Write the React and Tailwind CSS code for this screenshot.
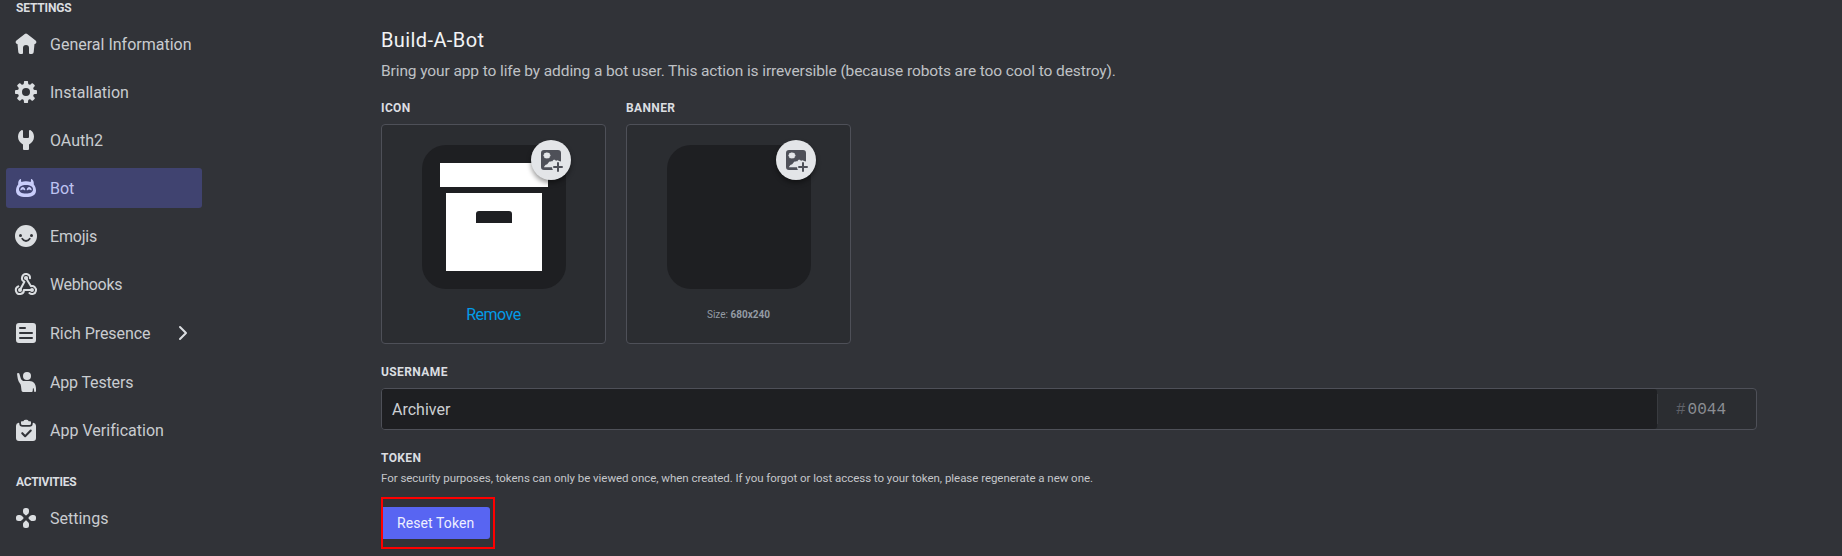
import React from "react";

function Icon({ children, size = "size-6", ...rest }) {
  return (
    <svg viewBox="0 0 24 24" fill="currentColor" className={`${size} shrink-0`} {...rest}>
      {children}
    </svg>
  );
}

const HomeIcon = () => (
  <Icon>
    <path d="m2.4 8.4 8.38-6.46a2 2 0 0 1 2.44 0l8.39 6.45a2 2 0 0 1-.79 3.54l-.32.07-.82 8.2a2 2 0 0 1-1.99 1.8H16a1 1 0 0 1-1-1v-5a3 3 0 0 0-6 0v5a1 1 0 0 1-1 1H6.31a2 2 0 0 1-1.99-1.8L3.5 12l-.32-.07a2 2 0 0 1-.78-3.54Z" />
  </Icon>
);

const GearIcon = () => (
  <Icon>
    <path
      fillRule="evenodd"
      d="M10.56 1.1c-.46.05-.7.53-.64.98.18 1.16-.19 2.2-.98 2.53-.8.33-1.79-.15-2.49-1.1-.27-.36-.78-.52-1.14-.24-.77.59-1.45 1.27-2.04 2.04-.28.36-.12.87.24 1.14.96.7 1.43 1.7 1.1 2.49-.33.8-1.37 1.16-2.53.98-.45-.07-.93.18-.99.64a11.1 11.1 0 0 0 0 2.88c.06.46.54.7.99.64 1.16-.18 2.2.19 2.53.98.33.8-.14 1.79-1.1 2.49-.36.27-.52.78-.24 1.14.59.77 1.27 1.45 2.04 2.04.36.28.87.12 1.14-.24.7-.95 1.7-1.43 2.49-1.1.8.33 1.16 1.37.98 2.53-.07.45.18.93.64.99a11.1 11.1 0 0 0 2.88 0c.46-.06.7-.54.64-.99-.18-1.16.19-2.2.98-2.53.8-.33 1.79.14 2.49 1.1.27.36.78.52 1.14.24.77-.59 1.45-1.27 2.04-2.04.28-.36.12-.87-.24-1.14-.96-.7-1.43-1.7-1.1-2.49.33-.8 1.37-1.16 2.53-.98.45.07.93-.18.99-.64a11.1 11.1 0 0 0 0-2.88c-.06-.46-.54-.7-.99-.64-1.16.18-2.2-.19-2.53-.98-.33-.8.14-1.79 1.1-2.49.36-.27.52-.78.24-1.14a11.07 11.07 0 0 0-2.04-2.04c-.36-.28-.87-.12-1.14.24-.7.96-1.7 1.43-2.49 1.1-.8-.33-1.16-1.37-.98-2.53.07-.45-.18-.93-.64-.99a11.1 11.1 0 0 0-2.88 0ZM16 12a4 4 0 1 1-8 0 4 4 0 0 1 8 0Z"
    />
  </Icon>
);

const WrenchIcon = () => (
  <Icon>
    <path d="M9 2.9c0-.7-.7-1.1-1.3-.8A8 8 0 0 0 4 8.8c0 3.4 2 6 5 7.6V21a1 1 0 0 0 1 1h4a1 1 0 0 0 1-1v-4.600c3-1.600 5-4.200 5-7.600a8 8 0 0 0-3.700-6.700c-.6-.3-1.300.1-1.300.8V9a1 1 0 0 1-1 1h-4a1 1 0 0 1-1-1V2.900Z" />
  </Icon>
);

const BotIcon = () => (
  <Icon>
    <path
      fillRule="evenodd"
      d="M6.300 3.100c.4-.3.9.1.800.6-.2.900-.1 1.700.3 2.300A12 12 0 0 1 12 5.200c1.700 0 3.200.3 4.600.8.4-.6.500-1.400.3-2.300-.1-.5.4-.9.8-.6 1.700 1.100 2.300 3.200 2.100 5.300 1.400 1.700 2.200 3.800 2.200 6.100 0 4.800-4 6.500-10 6.500S2 19.300 2 14.500c0-2.300.8-4.400 2.200-6.100C4 6.300 4.600 4.200 6.300 3.100ZM12 9c-4.400 0-7 1.600-7 4.300S7.600 17.600 12 17.600s7-1.600 7-4.300S16.400 9 12 9Z"
    />
    <path d="M6.300 13.800c.4-1.800 1.300-2.800 2.500-2.800s2.100 1 2.500 2.800c.1.500-.5.700-.8.400-.5-.4-1-.6-1.700-.6s-1.200.2-1.700.6c-.3.300-.9.100-.8-.4ZM12.700 13.800c.4-1.800 1.300-2.800 2.500-2.800s2.100 1 2.500 2.800c.1.500-.5.700-.8.400-.5-.4-1-.6-1.700-.6s-1.200.2-1.700.6c-.3.300-.9.100-.8-.4Z" />
  </Icon>
);

const SmileIcon = () => (
  <Icon>
    <circle cx="12" cy="12" r="11" />
    <g className="text-[#313338]">
      <circle cx="6.500" cy="11.500" r="1.500" fill="currentColor" />
      <circle cx="17.500" cy="11.500" r="1.500" fill="currentColor" />
      <path d="M8.200 14.700c.8 1.500 2.200 2.300 3.800 2.300s3-.8 3.800-2.300" fill="none" stroke="currentColor" strokeWidth="1.800" strokeLinecap="round" />
    </g>
  </Icon>
);

const WebhookIcon = () => (
  <Icon>
    <circle cx="12" cy="6" r="2.100" />
    <circle cx="6" cy="18" r="2" />
    <circle cx="18" cy="18" r="2" />
    <g fill="none" stroke="currentColor" strokeWidth="2" strokeLinecap="round" strokeLinejoin="round">
      <path d="M6 18l4.400-8.300A4 4 0 1 1 16 6.300" />
      <path d="M12.200 6.500 17 14.200a4 4 0 1 1-1.600 6.900" />
      <path d="M18 18H9.900a4 4 0 1 1-5.600-3.600" />
    </g>
  </Icon>
);

const ArticleIcon = () => (
  <Icon>
    <path
      fillRule="evenodd"
      d="M5 2h14a3 3 0 0 1 3 3v14a3 3 0 0 1-3 3H5a3 3 0 0 1-3-3V5a3 3 0 0 1 3-3Zm1 4a1 1 0 0 0 0 2h5a1 1 0 1 0 0-2H6Zm0 5a1 1 0 1 0 0 2h12a1 1 0 1 0 0-2H6Zm0 5a1 1 0 1 0 0 2h12a1 1 0 1 0 0-2H6Z"
    />
  </Icon>
);

const TesterIcon = () => (
  <Icon>
    <circle cx="13" cy="6" r="4" />
    <path d="M3.100 4.100c-.2-1.300 1.700-1.700 2.200-.5l1.500 4.800c.5 1.500 1.700 2.600 3.700 2.600h5C19.500 11 22 14 22 18.500V21a1 1 0 0 1-1 1h-.6l-.7-3.500c-.1-.5-.8-.5-.8 0l-.2 2.600a1 1 0 0 1-1 .9H9a1.500 1.500 0 0 1-1.500-1.400L7 16.200c-.1-1.200-.5-2-1.200-2.900C3.800 10.800 3.500 7.500 3.100 4.100Z" />
  </Icon>
);

const ClipboardIcon = () => (
  <Icon>
    <path d="M9.300 3.200A3 3 0 0 1 12 1.800c1.200 0 2.200.5 2.700 1.400H16c.6 0 1 .4 1 1v1.300a1.500 1.500 0 0 1-1.500 1.500h-7A1.500 1.500 0 0 1 7 5.500V4.200c0-.6.4-1 1-1h1.300Z" />
    <path
      fillRule="evenodd"
      d="M4.600 4.800c.4-.1.700.2.700.6A3.300 3.300 0 0 0 8.600 8.700h6.800a3.300 3.300 0 0 0 3.300-3.300c0-.4.300-.7.700-.6A3 3 0 0 1 22 7.700V20a3 3 0 0 1-3 3H5a3 3 0 0 1-3-3V7.700a3 3 0 0 1 2.600-2.900Zm12.900 8.400a1 1 0 0 0-1.500-1.400l-4.800 4.900-2.200-2.200a1 1 0 0 0-1.500 1.400l2.900 3a1 1 0 0 0 1.500 0l5.600-5.700Z"
    />
  </Icon>
);

const PadIcon = () => (
  <Icon>
    <path d="M9 4.500A2.500 2.500 0 0 1 11.500 2h1A2.500 2.500 0 0 1 15 4.500v1.300c0 .6-.2 1.100-.6 1.600l-1.500 1.700c-.5.500-1.300.5-1.800 0L9.600 7.400C9.200 6.900 9 6.400 9 5.800V4.500Z" />
    <path d="M9 19.500a2.500 2.500 0 0 0 2.500 2.500h1a2.500 2.500 0 0 0 2.500-2.500v-1.300c0-.6-.2-1.100-.6-1.600l-1.500-1.700c-.5-.5-1.300-.5-1.800 0l-1.500 1.700c-.4.500-.6 1-.6 1.600v1.300Z" />
    <path d="M4.500 9A2.500 2.500 0 0 0 2 11.500v1A2.500 2.500 0 0 0 4.500 15h1.300c.6 0 1.100-.2 1.600-.6l1.700-1.500c.5-.5.500-1.300 0-1.800L7.400 9.600C6.900 9.200 6.400 9 5.800 9H4.500Z" />
    <path d="M19.500 9a2.500 2.500 0 0 1 2.500 2.500v1a2.500 2.500 0 0 1-2.500 2.500h-1.300c-.6 0-1.100-.2-1.600-.6l-1.700-1.500c-.5-.5-.5-1.300 0-1.800l1.700-1.500c.5-.4 1-.6 1.600-.6h1.300Z" />
  </Icon>
);

const ImagePlusIcon = () => (
  <Icon>
    <path
      fillRule="evenodd"
      d="M5 2h14a3 3 0 0 1 3 3v8.600c-.5-.5-1.200-.7-2-.7-.9-1-2.400-1-3 0l-.7-.8c-.5-.6-1.500-.6-2 0l-1.200 1.400c-.5-.3-1.200-.2-1.600.2-.6-.3-1.400-.1-1.700.5L8 16.600c-.7-.2-1.400 0-1.800.6l-1.100 1.500c-.2.300 0 .6.300.6h7.700c-.1 1.100.2 2 .9 2.700H5a3 3 0 0 1-3-3V5a3 3 0 0 1 3-3Zm3.900 2.900a1.100 1.100 0 0 0-1.900 0 1.200 1.200 0 0 0-1.800 1.400 1.200 1.200 0 0 0 0 2.300A1.200 1.200 0 0 0 7 10a1.100 1.100 0 0 0 1.900 0 1.200 1.200 0 0 0 1.800-1.400 1.200 1.200 0 0 0 0-2.300 1.200 1.200 0 0 0-1.800-1.400Z"
    />
    <path d="M19 15v8M15 19h8" fill="none" stroke="currentColor" strokeWidth="2" strokeLinecap="round" />
  </Icon>
);

function NavItem({ icon, label, active, arrow, tall, spacing = "" }) {
  return (
    <li
      className={`flex items-center rounded-[3px] pl-2 ${tall ? "h-[42px]" : "h-10"} ${
        active ? "bg-[#404370] text-[#c9cdfb]" : "text-[#dbdee1]"
      }`}
    >
      {icon}
      <span className={`ml-3 pt-[2px] text-base ${spacing} ${active ? "text-[#bec2f0]" : "text-[#c9ccd0]"}`}>{label}</span>
      {arrow && (
        <svg viewBox="0 0 10 16" fill="none" stroke="currentColor" strokeWidth="2" strokeLinecap="round" strokeLinejoin="round" className="mr-[14px] ml-auto h-4 w-[10px]">
          <path d="m2 2 6 6-6 6" />
        </svg>
      )}
    </li>
  );
}

function Label({ children, className = "" }) {
  return <div className={`text-xs leading-4 font-bold text-[#dbdee1] ${className}`}>{children}</div>;
}

function ImageCard({ label, art, footer }) {
  return (
    <div className="w-[225px]">
      <Label className="tracking-[0.38px]">{label}</Label>
      <div className="mt-2 flex h-[220px] flex-col items-center rounded-[4px] border border-[#4e5058] bg-[#2b2d31] pt-5">
        <div className="relative h-36 w-36 rounded-3xl bg-[#1e1f22]">
          {art}
          <div className="absolute -top-[5px] -right-[5px] flex size-10 items-center justify-center rounded-full bg-[#e3e5e8] text-[#4e5058] shadow-[0_3px_5px_rgba(0,0,0,0.4)]">
            <ImagePlusIcon />
          </div>
        </div>
        <div className="mt-[14px] flex h-6 items-center">{footer}</div>
      </div>
    </div>
  );
}

const ArchiveBox = () => (
  <svg viewBox="0 0 144 144" className="size-36">
    <path fill="#fff" d="M18 18h108v24H18z" />
    <path fill="#fff" fillRule="evenodd" d="M24 48h96v78H24zM57 66a3 3 0 0 0-3 3v9h36v-9a3 3 0 0 0-3-3z" />
  </svg>
);

export default function App() {
  return (
    <div className="flex h-[556px] w-[1842px] overflow-hidden bg-[#313338] font-['Roboto','Noto_Sans',sans-serif]">
      <nav className="w-[202px] shrink-0 pl-[6px]">
        <Label className="pl-[10px] tracking-[-0.15px]">SETTINGS</Label>
        <ul className="mt-2 flex flex-col gap-2">
          <NavItem icon={<HomeIcon />} label="General Information" />
          <NavItem icon={<GearIcon />} label="Installation" />
          <NavItem icon={<WrenchIcon />} label="OAuth2" />
          <NavItem icon={<BotIcon />} label="Bot" active />
          <NavItem icon={<SmileIcon />} label="Emojis" spacing="tracking-[-0.2px]" />
          <NavItem icon={<WebhookIcon />} label="Webhooks" spacing="tracking-[-0.35px]" />
          <NavItem icon={<ArticleIcon />} label="Rich Presence" spacing="tracking-[-0.05px]" arrow tall />
          <NavItem icon={<TesterIcon />} label="App Testers" spacing="tracking-[-0.15px]" />
          <NavItem icon={<ClipboardIcon />} label="App Verification" spacing="tracking-[0.02px]" />
        </ul>
        <Label className="mt-6 pl-[10px] tracking-[-0.25px]">ACTIVITIES</Label>
        <ul className="mt-2">
          <NavItem icon={<PadIcon />} label="Settings" />
        </ul>
      </nav>

      <main className="ml-[179px] w-[1376px] pt-7">
        <h1 className="text-xl leading-6 font-normal tracking-[0.4px] text-[#f2f3f5]">Build-A-Bot</h1>
        <p className="mt-[9px] text-[15.500px] leading-5 tracking-[-0.1px] whitespace-nowrap text-[#bfc1c5]">
          Bring your app to life by adding a bot user. This action is irreversible (because robots are too cool to destroy).
        </p>

        <div className="mt-[19px] flex gap-5">
          <ImageCard
            label="ICON"
            art={<ArchiveBox />}
            footer={<button className="text-base tracking-[-0.5px] text-[#039be7]">Remove</button>}
          />
          <ImageCard
            label="BANNER"
            footer={
              <span className="pb-[2px] text-[10px] text-[#949ba4]">
                Size: <b className="font-bold">680x240</b>
              </span>
            }
          />
        </div>

        <Label className="mt-5 tracking-[0.4px]">USERNAME</Label>
        <div className="mt-2 flex h-[42px] items-center rounded-[4px] border border-[#4e5058] bg-[#2b2d31]">
          <div className="flex h-full w-[1275px] items-center rounded-[3px] bg-[#1e1f22] pt-[2px] pl-[10px] text-base text-[#cccfd2]">
            Archiver
          </div>
          <div className="flex h-[30px] items-center border-l border-[#393b40] pt-[2px] pl-[18px] font-['Liberation_Mono',monospace] text-base">
            <span className="mr-[2px] text-[#606269]">#</span>
            <span className="text-[#8b8d93]">0044</span>
          </div>
        </div>

        <Label className="mt-5 tracking-[0.4px]">TOKEN</Label>
        <p className="mt-1 text-[11.500px] leading-4 tracking-[-0.035px] whitespace-nowrap text-[#c4c6ca]">
          For security purposes, tokens can only be viewed once, when created. If you forgot or lost access to your token, please regenerate a new one.
        </p>

        <div className="mt-[11px] flex h-[52px] w-[114px] items-center border-2 border-[#fe0000]">
          <button className="h-8 w-[107px] rounded-r-[3px] bg-[#5865f2] pl-[14px] text-left text-sm tracking-[0.1px] whitespace-nowrap text-[#eeefff]">
            Reset Token
          </button>
        </div>
      </main>
    </div>
  );
}
